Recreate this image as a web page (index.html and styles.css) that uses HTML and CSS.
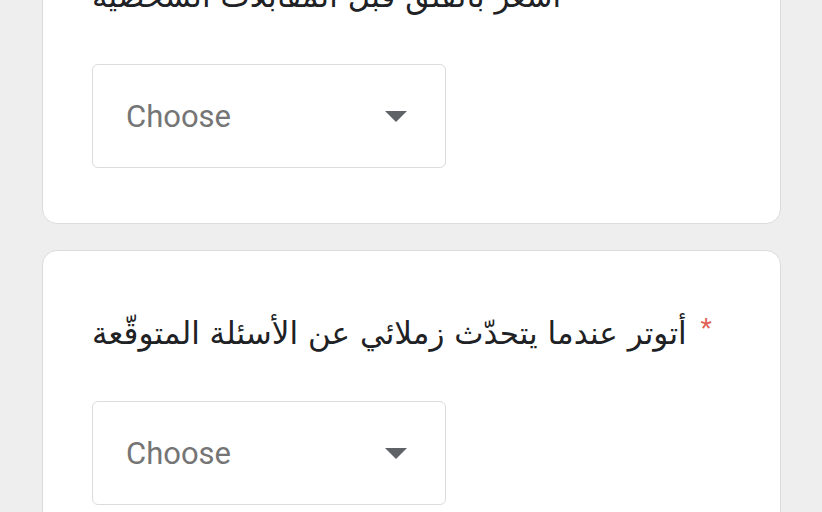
FILE: index.html
```html
<!DOCTYPE html>
<html>
  <head>
    <title>quiz form</title>
    <link rel="stylesheet" href="styles.css">
  </head>

  <body>
    <div class="form">
      <div class="card">
        <div class="question">
          <span class="title">أشعر بالقلق قبل المقابلات الشخصية</span>
          <span class="required">*</span>
        </div>
        <div class="dropdown">
          <span class="choose">Choose</span>
          <svg class="arrow" width="22" height="11" viewBox="0 0 22 11">
            <path d="M0 0 L22 0 L11 11 Z" fill="#5f6368" />
          </svg>
        </div>
      </div>

      <div class="card">
        <div class="question">
          <span class="title">أتوتر عندما يتحدّث زملائي عن الأسئلة المتوقّعة</span>
          <span class="required">*</span>
        </div>
        <div class="dropdown">
          <span class="choose">Choose</span>
          <svg class="arrow" width="22" height="11" viewBox="0 0 22 11">
            <path d="M0 0 L22 0 L11 11 Z" fill="#5f6368" />
          </svg>
        </div>
      </div>
    </div>
  </body>
</html>
```

FILE: styles.css
```css
/* page background */
body {
  margin: 0;
  background-color: #eeeeee;
  font-family: Roboto, "Noto Sans", sans-serif;
  overflow: hidden;
}

.form {
  display: flex;
  flex-direction: column;
  gap: 26px;
  margin: -87px 41px 0 42px;
}

/* question card */
.card {
  background-color: #fff;
  border: 1.5px solid #dadce0;
  border-radius: 15px;
  padding: 54px 50px 55px 49px;
}

.question {
  font-family: "DejaVu Sans", sans-serif;
  font-size: 31px;
  line-height: 46px;
  color: #202124;
  margin-bottom: 45px;
}

.required {
  font-family: Roboto, sans-serif;
  font-size: 26px;
  color: #e06055;
  vertical-align: 7px;
  margin-left: 4px;
}

/* select box */
.dropdown {
  width: 354px;
  height: 104px;
  box-sizing: border-box;
  border: 1.5px solid #dadce0;
  border-radius: 6px;
  display: flex;
  justify-content: space-between;
  align-items: center;
  padding: 0 38px 0 33px;
}

.choose {
  font-size: 31px;
  color: #757575;
}
```
